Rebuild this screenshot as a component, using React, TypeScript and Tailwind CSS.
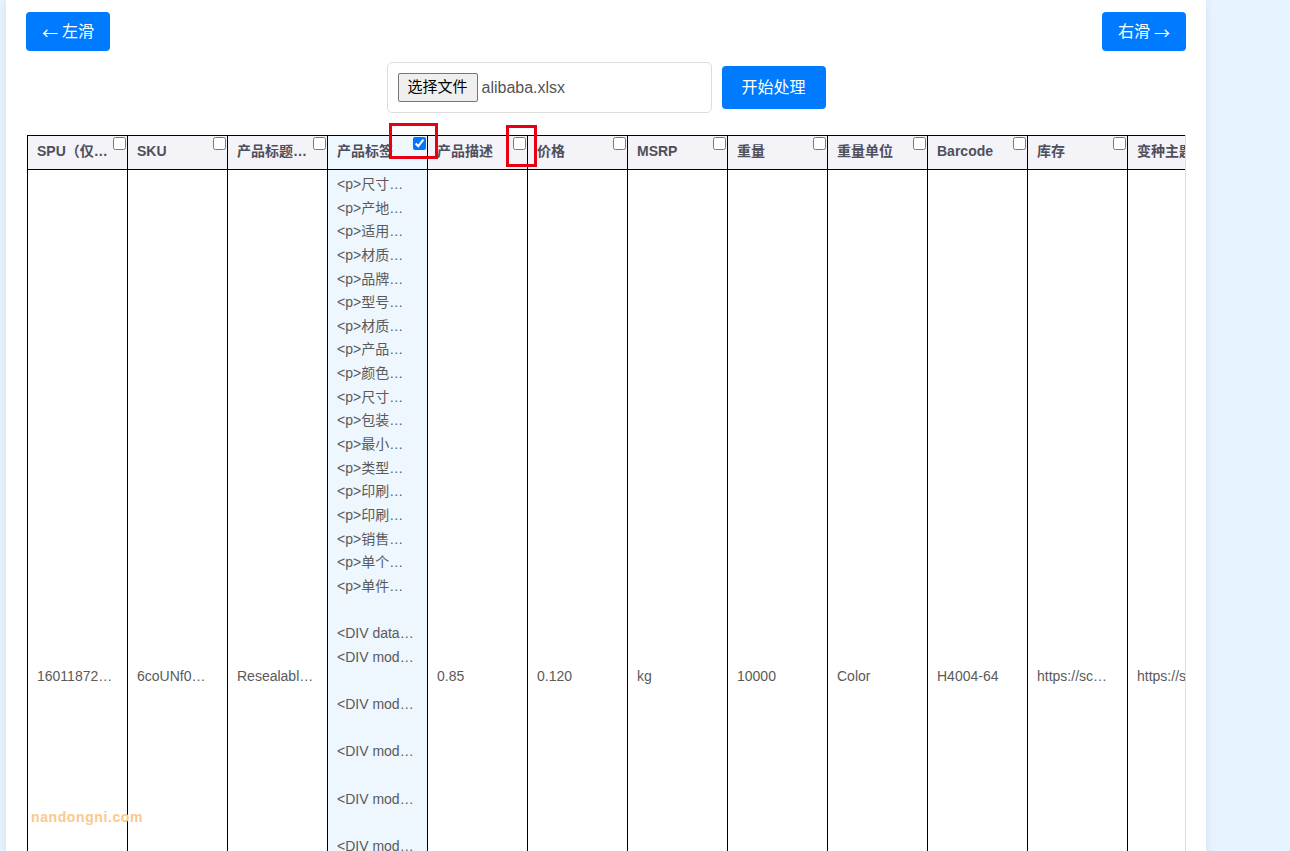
import React from 'react'

// ── Data ──────────────────────────────────────────────────────────────────────

const HEADERS = [
  'SPU（仅支持数字）',
  'SKU',
  '产品标题（英文）',
  '产品标签',
  '产品描述',
  '价格',
  'MSRP',
  '重量',
  '重量单位',
  'Barcode',
  '库存',
  '变种主题名称',
]

const ROW = [
  '1601187254321',
  '6coUNf0WqXyZ',
  'Resealable Bags',
  null,
  '0.85',
  '0.120',
  'kg',
  '10000',
  'Color',
  'H4004-64',
  'https://scWM.alicdn.com',
  'https://sWM.alicdn.com',
]

const TAG_LINES = [
  '<p>尺寸规格</p>',
  '<p>产地中国</p>',
  '<p>适用场景</p>',
  '<p>材质材料</p>',
  '<p>品牌名称</p>',
  '<p>型号规格</p>',
  '<p>材质类别</p>',
  '<p>产品名称</p>',
  '<p>颜色分类</p>',
  '<p>尺寸大小</p>',
  '<p>包装方式</p>',
  '<p>最小起订</p>',
  '<p>类型款式</p>',
  '<p>印刷方式</p>',
  '<p>印刷颜色</p>',
  '<p>销售单位</p>',
  '<p>单个包装</p>',
  '<p>单件毛重</p>',
  '',
  '<DIV data-section="detail">',
  '<DIV module-title="a">',
  '',
  '<DIV module-title="b">',
  '',
  '<DIV module-title="c">',
  '',
  '<DIV module-title="d">',
  '',
  '<DIV module-title="e">',
  '',
  '<DIV module-title="f">',
  '',
  '<DIV module-title="g">',
  '',
]

const CHECKED_COL = 3

const ARROW_FONT = { fontFamily: '"Noto Sans CJK SC", sans-serif' }

// ── Page ──────────────────────────────────────────────────────────────────────

export default function App() {
  return (
    <div
      className="relative min-h-[851px] overflow-hidden bg-[#e7f3fe]"
      style={{ fontFamily: '"Liberation Sans", Arial, "Noto Sans CJK SC", sans-serif' }}
    >
      <div className="ml-[6px] w-[1200px] min-h-[851px] bg-white px-5 pt-3 shadow-[0_0_10px_rgba(0,0,0,0.08)]">
        {/* Slide buttons */}
        <div className="flex items-center justify-between">
          <button
            type="button"
            className="inline-flex h-[39px] w-[84px] items-center justify-center gap-[4px] rounded-[4px] bg-[#007bff] text-[16px] text-white"
          >
            <span style={ARROW_FONT}>←</span>
            <span>左滑</span>
          </button>
          <button
            type="button"
            className="inline-flex h-[39px] w-[84px] items-center justify-center gap-[4px] rounded-[4px] bg-[#007bff] text-[16px] text-white"
          >
            <span>右滑</span>
            <span style={ARROW_FONT}>→</span>
          </button>
        </div>

        {/* Upload row */}
        <div className="mt-[11px] flex items-center justify-center gap-[10px]">
          <div className="flex h-[51px] w-[325px] items-center gap-[4px] rounded-[5px] border border-[#dddddd] px-[10px]">
            <span className="inline-flex h-[29px] w-[80px] items-center justify-center rounded-[2px] border border-[#767676] bg-[#efefef] text-[15px] text-black">
              选择文件
            </span>
            <span className="text-[16px] text-[#555]">alibaba.xlsx</span>
          </div>
          <button
            type="button"
            className="inline-flex h-[43px] w-[104px] items-center justify-center rounded-[4px] bg-[#007bff] text-[16px] text-white"
          >
            开始处理
          </button>
        </div>

        {/* Table */}
        <div className="mt-[22px] ml-px w-[1159px] overflow-hidden border-r border-[#dddddd]">
          <table className="w-[1200px] table-fixed border-collapse text-[14px]">
            <thead>
              <tr className="h-[34px]">
                {HEADERS.map((h, i) => (
                  <th
                    key={h}
                    className={`relative w-[100px] border border-black px-[9px] pb-[3px] text-left font-bold text-[#4f4f5c] ${
                      i === CHECKED_COL ? 'bg-[#eef6fe]' : 'bg-[#f3f3f8]'
                    }`}
                  >
                    <div className="overflow-hidden text-ellipsis whitespace-nowrap">{h}</div>
                    <input
                      type="checkbox"
                      defaultChecked={i === CHECKED_COL}
                      className="absolute top-px right-px m-0 h-[13px] w-[13px]"
                    />
                  </th>
                ))}
              </tr>
            </thead>
            <tbody>
              <tr className="h-[1014px]">
                {ROW.map((cell, i) =>
                  cell === null ? (
                    <td
                      key={i}
                      className="border border-black bg-[#eef6fe] pt-[3px] pr-[11px] pl-[9px] align-top text-[#5a5a5a]"
                    >
                      {TAG_LINES.map((line, j) => (
                        <div
                          key={j}
                          className="h-[23.65px] overflow-hidden text-ellipsis whitespace-nowrap leading-[23.65px]"
                        >
                          {line}
                        </div>
                      ))}
                    </td>
                  ) : (
                    <td key={i} className="border border-black px-[9px] align-middle text-[#5a5a5a]">
                      <div className="overflow-hidden text-ellipsis whitespace-nowrap">{cell}</div>
                    </td>
                  ),
                )}
              </tr>
            </tbody>
          </table>
        </div>
      </div>

      {/* Annotation boxes */}
      <div className="absolute top-[123px] left-[389px] h-[36px] w-[49px] border-[3px] border-[#e60012]" />
      <div className="absolute top-[125px] left-[506px] h-[42px] w-[31px] border-[3px] border-[#e60012]" />

      {/* Watermark */}
      <div className="absolute top-[807px] left-[31px] text-[14px] font-bold tracking-[0.6px] text-[#fcc88c]">
        nandongni.com
      </div>
    </div>
  )
}
